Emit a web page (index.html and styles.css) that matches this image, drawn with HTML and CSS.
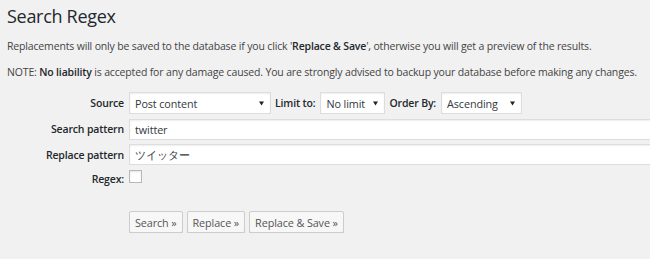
FILE: index.html
```html
<!DOCTYPE html>
<html lang="en">
<head>
    <meta charset="UTF-8">
    <title>Search Regex</title>
    <link rel="stylesheet" href="styles.css">
</head>
<body>

<div class="wrap">
    <h2>Search Regex</h2>
    <p>Replacements will only be saved to the database if you click '<strong>Replace &amp; Save</strong>', otherwise you will get a preview of the results.</p>
    <p class="note">NOTE: <strong>No liability</strong> is accepted for any damage caused. You are strongly advised to backup your database before making any changes.</p>

    <form class="search-form">
        <label class="row-label">Source</label>
        <div class="field inline">
            <select class="source">
                <option>Post content</option>
            </select>
            <span class="inline-label">Limit to:</span>
            <select class="limit">
                <option>No limit</option>
            </select>
            <span class="inline-label">Order By:</span>
            <select class="order">
                <option>Ascending</option>
            </select>
        </div>

        <label class="row-label">Search pattern</label>
        <div class="field first-text">
            <input type="text" class="pattern" value="twitter">
        </div>

        <label class="row-label">Replace pattern</label>
        <div class="field">
            <input type="text" class="pattern jp" value="ツイッター">
        </div>

        <label class="row-label regex-label">Regex:</label>
        <div class="field">
            <input type="checkbox" class="check">
        </div>

        <div></div>
        <div class="buttons">
            <button type="button" class="button">Search »</button>
            <button type="button" class="button">Replace »</button>
            <button type="button" class="button">Replace &amp; Save »</button>
        </div>
    </form>
</div>

</body>
</html>
```

FILE: styles.css
```css
html, body {
    margin: 0;
    padding: 0;
    overflow: hidden;
}

body {
    background-color: #f1f1f1;
    color: #444;
    font-family: "Open Sans", sans-serif;
    font-size: 10.5px;
    letter-spacing: -0.16px;
}

.wrap {
    padding: 0 7px;
}

h2 {
    font-size: 18px;
    font-weight: 400;
    color: #23282d;
    margin: 3px 0 0;
    line-height: 26px;
    letter-spacing: -0.3px;
}

p {
    margin: 11px 0 0;
    line-height: 13px;
    white-space: nowrap;
}

p.note {
    margin-top: 13px;
}

strong {
    font-weight: 600;
    color: #23282d;
}

.search-form {
    display: grid;
    grid-template-columns: 117px 1fr;
    column-gap: 5px;
    row-gap: 4px;
    margin-top: 13px;
}

.row-label {
    text-align: right;
    font-weight: 600;
    color: #23282d;
    line-height: 14px;
    padding-top: 4px;
}

.regex-label {
    padding-top: 3px;
}

.field.inline {
    display: flex;
    align-items: center;
}

.first-text {
    padding-top: 1px;
}

.inline-label {
    font-weight: 600;
    color: #23282d;
    margin: 0 5px 0 4px;
}

select, input[type="text"] {
    font-family: "Open Sans", sans-serif;
    font-size: 10.8px;
    letter-spacing: -0.1px;
    color: #32373c;
    background-color: #fff;
    border: 1px solid #ddd;
    box-shadow: inset 0 1px 2px rgba(0, 0, 0, 0.07);
    margin: 0;
    box-sizing: border-box;
    outline: none;
}

select {
    -webkit-appearance: none;
    appearance: none;
    height: 22px;
    padding: 0 14px 0 5px;
    border-radius: 0;
    background-image: url("data:image/svg+xml,%3Csvg xmlns='http://www.w3.org/2000/svg' width='5' height='5'%3E%3Cpath d='M0 0.5h5L2.5 4.5z' fill='%23222'/%3E%3C/svg%3E");
    background-repeat: no-repeat;
    background-position: right 6px center;
}

.source {
    width: 142px;
}

.limit {
    width: 65px;
}

.order {
    width: 81px;
}

.pattern {
    width: 600px;
    height: 21px;
    padding: 0 5px;
}

.check {
    -webkit-appearance: none;
    appearance: none;
    width: 13px;
    height: 13px;
    margin: 1px 0 0;
    border: 1px solid #b4b9be;
    background-color: #fff;
    box-shadow: inset 0 1px 2px rgba(0, 0, 0, 0.1);
    display: block;
}

.buttons {
    display: flex;
    gap: 4px;
    margin-top: 21px;
}

.button {
    font-family: "Open Sans", sans-serif;
    font-size: 10.8px;
    letter-spacing: -0.1px;
    color: #555;
    background-color: #f7f7f7;
    border: 1px solid #ccc;
    box-shadow: 0 1px 0 #ccc;
    border-radius: 2px;
    height: 22px;
    padding: 0 5px;
    margin: 0;
}
```
